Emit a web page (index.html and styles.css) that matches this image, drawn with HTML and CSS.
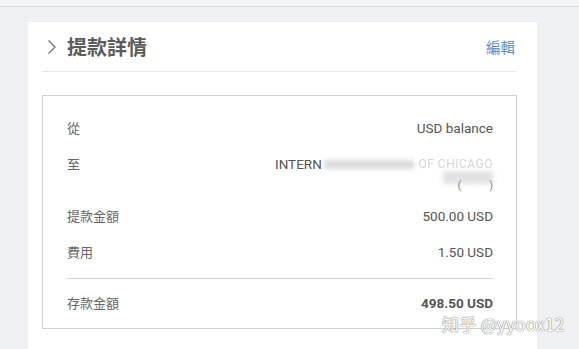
FILE: index.html
```html
<!DOCTYPE html>
<html lang="zh-Hant">
<head>
<meta charset="utf-8">
<link rel="stylesheet" href="styles.css">
</head>
<body>
<div class="topbar"></div>
<div class="page">
  <div class="card">
    <div class="card-head">
      <div class="title">
        <svg class="chev" width="10" height="16" viewBox="0 0 10 16"><path d="M1.5 1.5 L8 8 L1.5 14.5" fill="none" stroke="#777" stroke-width="1.4"/></svg>
        <span>提款詳情</span>
      </div>
      <a class="edit">編輯</a>
    </div>
    <div class="box">
      <div class="row"><span class="label">從</span><span class="val">USD balance</span></div>
      <div class="row row-to">
        <span class="label">至</span>
        <div class="val multi">
          <div class="l1">INTERN<span class="blur b1"></span><span class="faint">OF CHICAGO</span></div>
          <div class="l2"><span class="blur b2"></span><span class="par">(</span><span class="gap"></span><span class="par">)</span></div>
        </div>
      </div>
      <div class="row"><span class="label">提款金額</span><span class="val">500.00 USD</span></div>
      <div class="row"><span class="label">費用</span><span class="val">1.50 USD</span></div>
      <div class="divider"></div>
      <div class="row total"><span class="label">存款金額</span><span class="val">498.50 USD</span></div>
    </div>
  </div>
</div>
<div class="watermark">知乎 @yyoox12</div>
</body>
</html>
```
FILE: styles.css
```css
html, body {
  margin: 0;
  padding: 0;
}
body {
  background: #eff0f3;
  font-family: Roboto, "Noto Sans CJK TC", sans-serif;
  width: 579px;
  height: 349px;
  overflow: hidden;
  position: relative;
}
.topbar {
  height: 6px;
  background: #f3f4f6;
  border-bottom: 1px solid #d9dadd;
}
.page {
  padding: 15px 42px 0 28px;
}
.card {
  background: #fff;
  padding: 0 20px 30px 14px;
  height: 330px;
  box-sizing: border-box;
}
.card-head {
  height: 50px;
  display: flex;
  align-items: center;
  justify-content: space-between;
  border-bottom: 1px solid #e6e6e6;
  box-sizing: border-box;
}
.title {
  display: flex;
  align-items: center;
  gap: 10px;
  padding-left: 5px;
  font-family: "Noto Sans CJK TC", sans-serif;
  font-size: 20px;
  font-weight: 700;
  color: #5c5c5c;
}
.chev {
  display: block;
}
.edit {
  font-family: "Noto Sans CJK TC", sans-serif;
  font-size: 14.5px;
  color: #5a8fc6;
  margin-right: 2px;
}
.box {
  margin-top: 23px;
  border: 1px solid #cfcfcf;
  padding: 14px 23px 15px 24px;
}
.row {
  display: flex;
  justify-content: space-between;
  align-items: flex-start;
  padding: 8px 0;
  line-height: 20px;
  font-size: 13.5px;
  color: #555;
}
.label {
  font-family: "Noto Sans CJK TC", sans-serif;
  font-size: 13px;
  color: #666;
}
.val {
  text-align: right;
}
.row-to {
  padding-bottom: 6px;
}
.multi .l1 {
  display: flex;
  align-items: center;
  width: 218px;
  height: 20px;
  color: #555;
}
.multi .l2 {
  display: flex;
  align-items: flex-end;
  justify-content: flex-end;
  height: 18px;
  line-height: 12px;
  position: relative;
  color: #888;
  font-size: 11px;
}
.blur {
  display: inline-block;
  background: #dcdcdc;
  filter: blur(2px);
}
.b1 {
  flex: 1;
  height: 9px;
  margin-left: 2px;
}
.faint {
  color: #d4d4d4;
  font-size: 12px;
  letter-spacing: 0.5px;
  margin-left: 4px;
  filter: blur(0.7px);
}
.b2 {
  position: absolute;
  right: 0;
  top: -3px;
  width: 50px;
  height: 13px;
  background: #e2e2e2;
}
.par {
  position: relative;
}
.gap {
  display: inline-block;
  width: 28px;
}
.divider {
  margin-top: 8px;
  border-top: 1px solid #d4d4d4;
}
.total {
  padding-top: 14px;
  padding-bottom: 0;
}
.total .val {
  font-weight: 700;
}
.watermark {
  position: absolute;
  left: 442px;
  top: 311px;
  font-family: "Noto Sans CJK SC", sans-serif;
  font-size: 17px;
  color: #fff;
  letter-spacing: 0.3px;
  text-shadow: 0 0 1px #888, 0 0 1px #888, 0 0 1px #999;
}
```
